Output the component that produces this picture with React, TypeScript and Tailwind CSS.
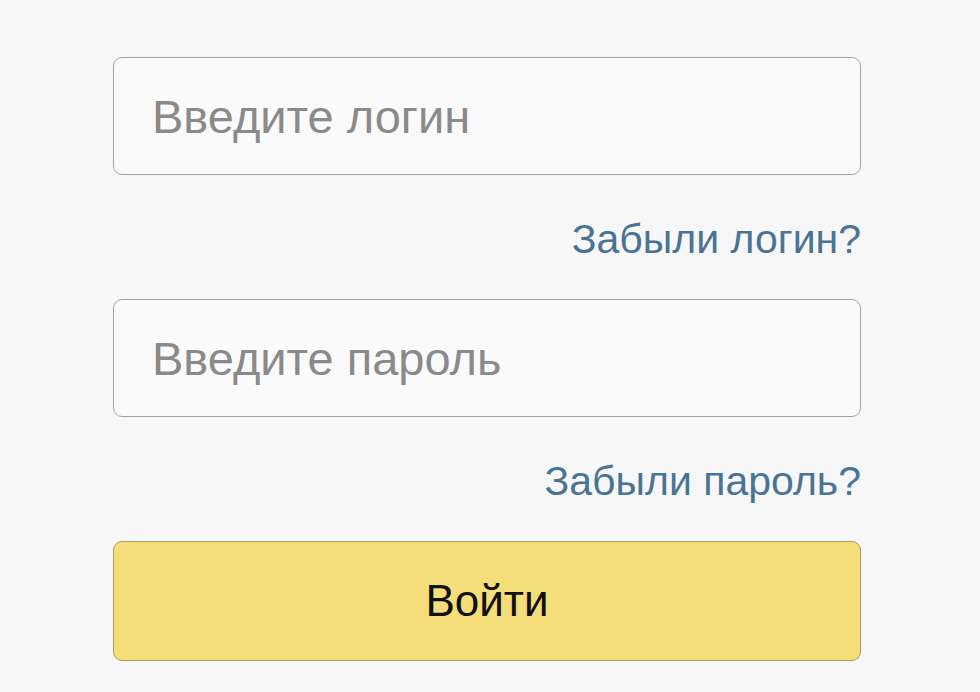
import React from 'react';

const font = { fontFamily: '"Liberation Sans", Arial, sans-serif' };

const Field: React.FC<{ placeholder: string }> = ({ placeholder }) => (
    <input
        type="text"
        placeholder={placeholder}
        className="block h-[118px] w-full rounded-[9px] border border-[#a3a3a3] bg-[#fafafa] pl-[38px] text-[47px] text-[#555] outline-none placeholder:text-[#8a8a8a]"
        style={font}
    />
);

const ForgotLink: React.FC<{ label: string }> = ({ label }) => (
    <div className="flex h-[124px] items-center justify-end pt-[4px]">
        <a href="#" className="text-[41px] leading-none text-[#4a7494]" style={font}>
            {label}
        </a>
    </div>
);

export default function App() {
    return (
        <div className="h-[692px] w-[980px] bg-[#f7f7f7] pt-[57px]">
            <div className="ml-[113px] w-[748px]">
                <Field placeholder="Введите логин" />
                <ForgotLink label="Забыли логин?" />
                <Field placeholder="Введите пароль" />
                <ForgotLink label="Забыли пароль?" />
                <button
                    className="block h-[120px] w-full rounded-[9px] border border-[#a99d68] bg-[#f5de79] text-[44px] text-[#111]"
                    style={font}
                >
                    Войти
                </button>
            </div>
        </div>
    );
}
